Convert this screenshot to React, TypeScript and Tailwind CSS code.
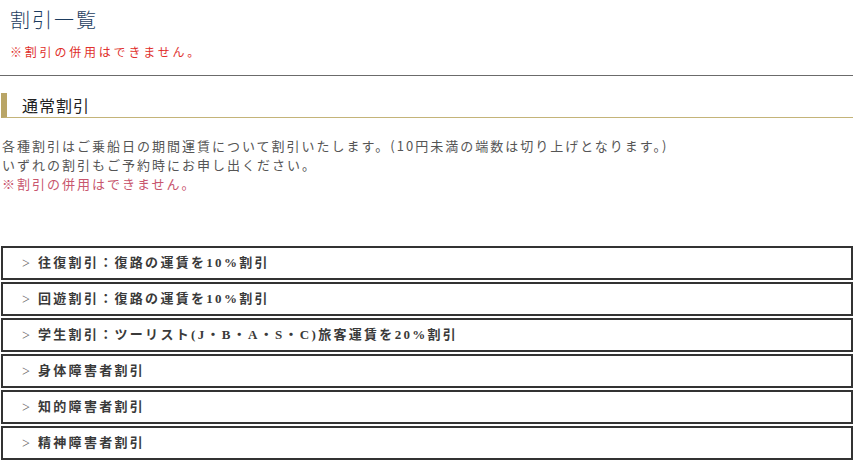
const items = [
    '往復割引：復路の運賃を10%割引',
    '回遊割引：復路の運賃を10%割引',
    '学生割引：ツーリスト(J・B・A・S・C)旅客運賃を20%割引',
    '身体障害者割引',
    '知的障害者割引',
    '精神障害者割引',
];

export default function App() {
    return (
        <div className="w-[859px] h-[468px] overflow-hidden bg-white font-['Noto_Sans_CJK_JP',sans-serif]">
            <h1 className="pt-[5px] pl-[10px] text-[20px] leading-[30px] font-light tracking-[2px] text-[#1d3d60]">
                割引一覧
            </h1>
            <p className="mt-[7px] pl-[10px] text-[12px] leading-[20px] tracking-[2.8px] text-[#e0302c]">
                ※割引の併用はできません。
            </p>
            <div className="mt-[13px] w-[853px] border-t border-[#6b6b6b]" />

            <h2 className="mt-[17px] ml-[1px] w-[852px] h-[25px] flex items-center border-l-[6px] border-b border-l-[#b9a566] border-b-[#c4b479] pl-[15px] text-[16px] tracking-[1px] text-[#222]">
                通常割引
            </h2>

            <div className="mt-[18px] pl-[2px] text-[13px] leading-[19px] tracking-[2px] text-[#555]">
                <p>各種割引はご乗船日の期間運賃について割引いたします。(10円未満の端数は切り上げとなります。)</p>
                <p>いずれの割引もご予約時にお申し出ください。</p>
                <p className="text-[#c8566e]">※割引の併用はできません。</p>
            </div>

            <ul className="mt-[53px] ml-[1px] w-[852px] flex flex-col gap-[2px]">
                {items.map(item => (
                    <li
                        key={item}
                        className="h-[34px] border-2 border-[#333] flex items-center pl-[19px] text-[13px] text-[#3a3a3a] font-['Liberation_Serif','Noto_Sans_CJK_JP',serif]"
                    >
                        <span className="w-[16px] text-[14px] text-[#666]">&gt;</span>
                        <span className="font-bold tracking-[2.3px]">{item}</span>
                    </li>
                ))}
            </ul>
        </div>
    );
}
